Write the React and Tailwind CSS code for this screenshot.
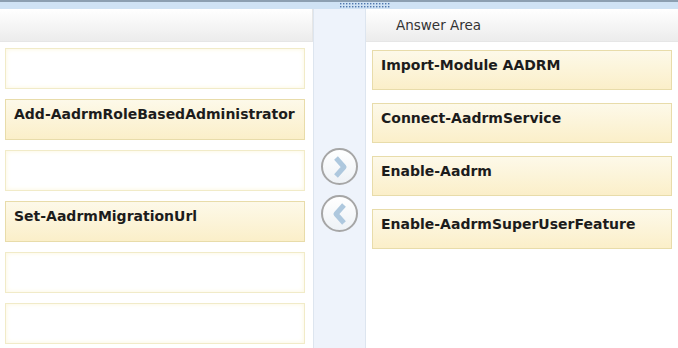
import React from 'react';

const leftItems = ['', 'Add-AadrmRoleBasedAdministrator', '', 'Set-AadrmMigrationUrl', '', ''];
const answerItems = ['Import-Module AADRM', 'Connect-AadrmService', 'Enable-Aadrm', 'Enable-AadrmSuperUserFeature'];

const Card = ({ text, className }) => (
    <div
        className={
            text
                ? `border border-[#e8dcaa] bg-gradient-to-b from-[#fdf9e9] to-[#fbefc9] px-[8px] pt-[6px] text-[14px] font-bold leading-[17px] text-[#1c1c1c] ${className}`
                : `border border-[#f1ebc8] bg-white shadow-[inset_0_0_5px_#fcf6dc] ${className}`
        }
    >
        {text}
    </div>
);

const Grip = () => (
    <svg width="52" height="6" viewBox="0 0 52 6">
        {Array.from({ length: 17 }).map((_, i) => (
            <g key={i} fill="#4f77ad">
                <rect x={i * 3 + 1} y="1" width="1.4" height="1.4" />
                <rect x={i * 3 + 1} y="4" width="1.4" height="1.4" />
            </g>
        ))}
    </svg>
);

const Arrow = ({ dir }) => (
    <div className="flex h-[37px] w-[37px] items-center justify-center rounded-full border-2 border-[#a6a6a6] bg-gradient-to-b from-white to-[#eef2f6]">
        <svg width="20" height="24" viewBox="0 0 20 24">
            <polyline
                points={dir === 'right' ? '6,3 14,12 6,21' : '14,3 6,12 14,21'}
                fill="none"
                stroke="#aec8de"
                strokeWidth="5"
                strokeLinejoin="round"
            />
        </svg>
    </div>
);

const App = () => {
    return (
        <div className="flex h-[348px] w-[678px] flex-col overflow-hidden bg-white font-['DejaVu_Sans',sans-serif]">
            {/* top bar with drag grip */}
            <div className="flex h-[9px] shrink-0 border-t-2 border-[#8c9fb1] bg-[#cfe2f4] pl-[339px]">
                <Grip />
            </div>

            <div className="flex flex-1">
                {/* choices */}
                <div className="flex w-[313px] flex-col">
                    <div className="h-[33px] border-b border-r border-[#e6e6e6] bg-gradient-to-b from-white to-[#ececec]" />
                    <div className="flex flex-col gap-[10px] pl-[5px] pr-[8px] pt-[6px]">
                        {leftItems.map((t, i) => (
                            <Card key={i} text={t} className="h-[41px]" />
                        ))}
                    </div>
                </div>

                {/* move buttons */}
                <div className="flex w-[53px] flex-col items-center gap-[10px] border-x border-[#dde5ef] bg-[#eef3fb] pt-[139px]">
                    <Arrow dir="right" />
                    <Arrow dir="left" />
                </div>

                {/* answer area */}
                <div className="flex flex-1 flex-col">
                    <div className="flex h-[33px] items-center border-b border-[#e6e6e6] bg-gradient-to-b from-white to-[#ececec] pl-[30px] text-[13.5px] text-[#333]">
                        Answer Area
                    </div>
                    <div className="flex flex-col gap-[13px] pl-[6px] pr-[6px] pt-[8px]">
                        {answerItems.map((t, i) => (
                            <Card key={i} text={t} className="h-[40px]" />
                        ))}
                    </div>
                </div>
            </div>
        </div>
    );
};

export default App;
